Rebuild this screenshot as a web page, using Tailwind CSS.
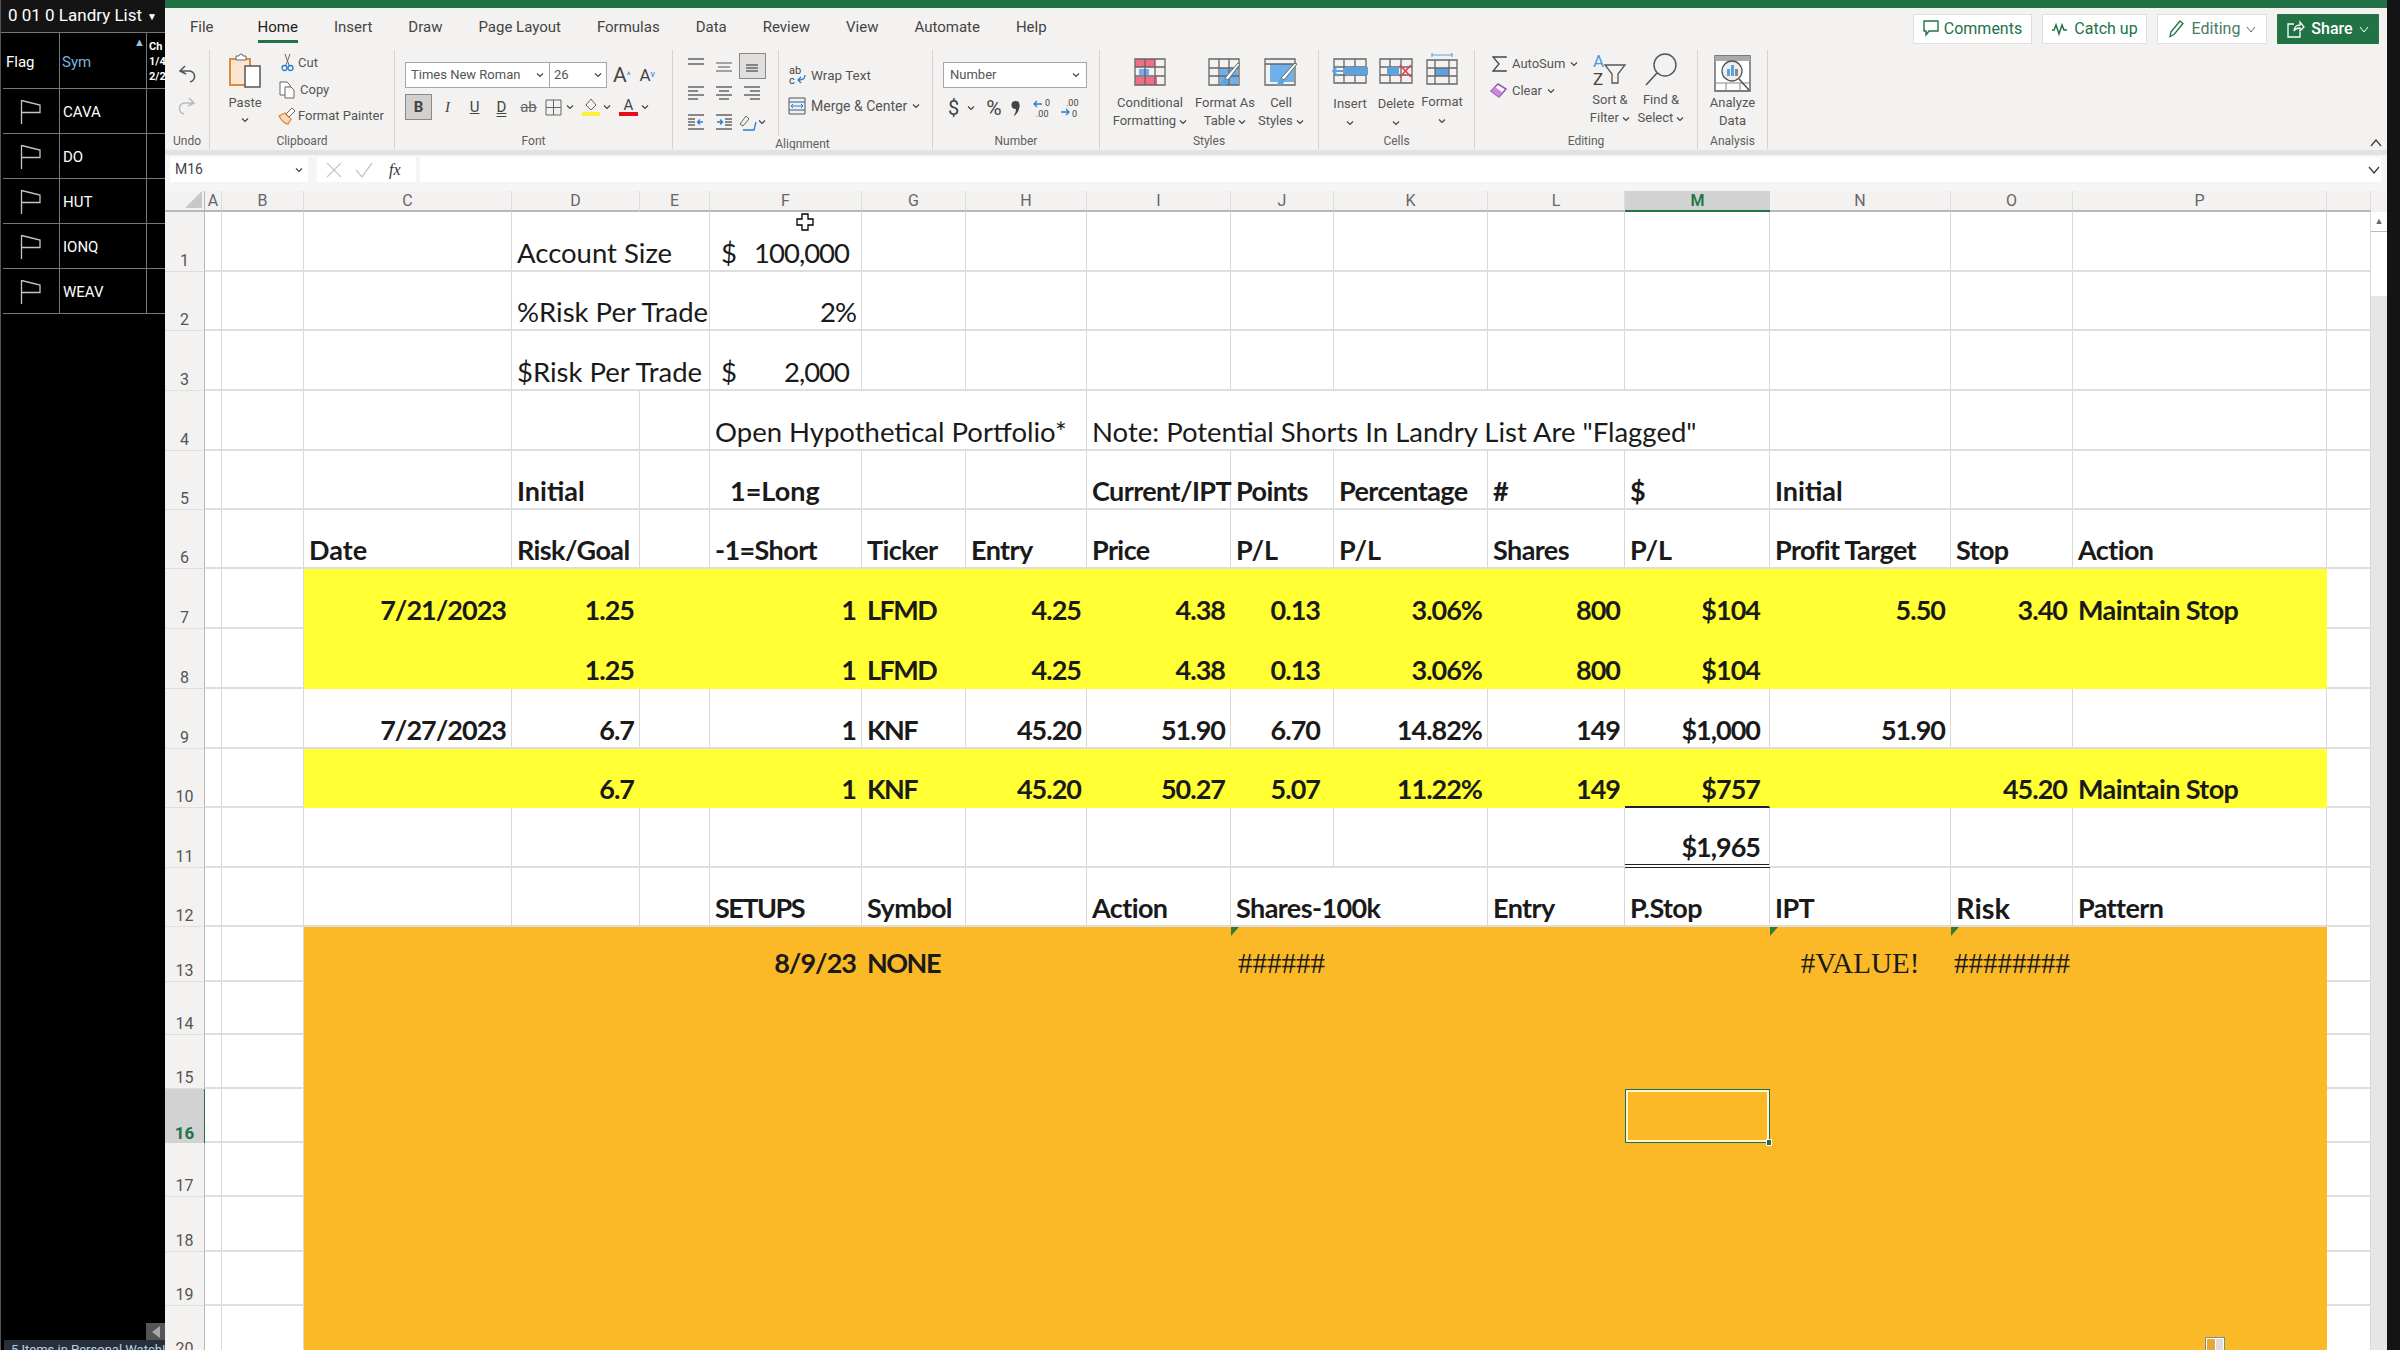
<!DOCTYPE html>
<html lang="en">
<head>
  <meta charset="UTF-8" />
  <title>Excel - Hypothetical Portfolio</title>
  <script src="https://cdn.jsdelivr.net/npm/@tailwindcss/browser@4"></script>
</head>
<body class="bg-black font-[Roboto,sans-serif]">
  <svg class="hidden">
    <symbol id="flag" viewBox="0 0 24 26"><path d="M1.5 1V25M1.5 1.5L20 6V13.5H1.5" fill="none" stroke="#c4c4c4" stroke-width="1.3"/></symbol>
    <symbol id="chev" viewBox="0 0 8 6"><path d="M1 1.5l3 3 3-3" fill="none" stroke="#444" stroke-width="1.2"/></symbol>
    <symbol id="al-top" viewBox="0 0 20 20"><path d="M2 3h16M2 8h16M4 13h0" stroke="#666" stroke-width="1.5"/></symbol>
    <symbol id="al-mid" viewBox="0 0 20 20"><path d="M2 7h16M4 11h12M2 15h16" stroke="#888" stroke-width="1.5"/></symbol>
    <symbol id="al-left" viewBox="0 0 20 20"><path d="M2 3h16M2 7h10M2 11h16M2 15h10" stroke="#666" stroke-width="1.5"/></symbol>
    <symbol id="al-center" viewBox="0 0 20 20"><path d="M2 3h16M5 7h10M2 11h16M5 15h10" stroke="#666" stroke-width="1.5"/></symbol>
    <symbol id="al-right" viewBox="0 0 20 20"><path d="M2 3h16M8 7h10M2 11h16M8 15h10" stroke="#666" stroke-width="1.5"/></symbol>
  </svg>

  <div class="relative flex w-[2400px] h-[1350px] overflow-hidden bg-black">

    <!-- watchlist panel -->
    <aside class="w-[165px] h-full flex flex-col border-l border-[#555] text-white shrink-0">
      <div class="h-[33px] flex items-center pl-[7px] bg-[#141414] border-b border-[#777] text-[17px] whitespace-nowrap">0 01 0 Landry List<span class="ml-[5px] text-[10px]">&#9660;</span></div>
      <div class="h-[56px] flex border-b border-[#777] ml-[2px]">
        <div class="w-[57px] border-r border-[#777] flex items-center pl-[3px] pt-[3px] text-[15px]">Flag</div>
        <div class="w-[87px] relative border-r border-[#777] flex items-center pl-[2px] pt-[3px] text-[15px] text-[#7db4dc]">Sym<span class="absolute right-[1px] top-[2px] text-[11px] text-[#8ec6e6]">&#9650;</span></div>
        <div class="flex-1 overflow-hidden pl-[2px] pt-[6px] text-[11px] leading-[15px] font-bold">Ch<br>1/4<br>2/2</div>
      </div>
      <div id="watch"></div>
      <div class="flex-1 flex items-end justify-end">
        <div class="w-[19px] h-[17px] bg-[#555] flex items-center justify-center"><span class="w-0 h-0 border-y-[6px] border-y-transparent border-r-[8px] border-r-[#a8a8a8]"></span></div>
      </div>
      <div class="h-[10px] ml-[3px] overflow-hidden bg-[#27303a] pl-[7px] text-[13px] leading-[16px] pt-[2px] text-[#b8cfe2] whitespace-nowrap">5 Items in Personal WatchList</div>
    </aside>

    <!-- excel window -->
    <main class="w-[2222px] h-full flex flex-col bg-[#f3f2f1] shrink-0">
      <div class="h-[8px] bg-[#217346]"></div>

      <!-- tabs -->
      <div class="h-[42px] flex items-start pl-[25px] text-[15px] text-[#444]">
        <div class="flex gap-[36px]">
          <span class="h-[35px] pt-[8px]">File</span>
          <span class="h-[35px] pt-[8px] ml-[8px] border-b-[3px] border-[#217346] text-[#222]">Home</span>
          <span class="h-[35px] pt-[8px]">Insert</span>
          <span class="h-[35px] pt-[8px]">Draw</span>
          <span class="h-[35px] pt-[8px]">Page Layout</span>
          <span class="h-[35px] pt-[8px]">Formulas</span>
          <span class="h-[35px] pt-[8px]">Data</span>
          <span class="h-[35px] pt-[8px]">Review</span>
          <span class="h-[35px] pt-[8px]">View</span>
          <span class="h-[35px] pt-[8px]">Automate</span>
          <span class="h-[35px] pt-[8px]">Help</span>
        </div>
        <div class="ml-auto mt-[6px] mr-[8px] flex gap-[10px] text-[16px] text-[#217346]">
          <div class="w-[119px] h-[30px] flex items-center justify-center gap-[5px] bg-white border border-[#e1dfdd]">
            <svg class="w-[16px] h-[18px]" viewBox="0 0 16 18"><path d="M1 1h14v10H6l-3 4v-4H1z" fill="none" stroke="#217346" stroke-width="1.4"/></svg>Comments</div>
          <div class="w-[105px] h-[30px] flex items-center justify-center gap-[5px] bg-white border border-[#e1dfdd]">
            <svg class="w-[18px] h-[16px]" viewBox="0 0 18 16"><path d="M1 9h2l2-5 3 9 3-9 2 5h3" fill="none" stroke="#217346" stroke-width="1.5"/></svg>Catch up</div>
          <div class="w-[110px] h-[30px] flex items-center justify-center gap-[6px] bg-white border border-[#e1dfdd] text-[#4a7b62]">
            <svg class="w-[18px] h-[20px]" viewBox="0 0 18 20"><path d="M3 13L12 2l3 2.500-9 11-4 2z" fill="none" stroke="#217346" stroke-width="1.3"/></svg>Editing
            <svg class="w-[10px] h-[7px]" viewBox="0 0 10 7"><path d="M1 1l4 5 4-5" fill="none" stroke="#666"/></svg></div>
          <div class="w-[102px] h-[30px] flex items-center justify-center gap-[6px] bg-[#217346] rounded-[1px] font-medium text-white">
            <svg class="w-[18px] h-[20px]" viewBox="0 0 18 20"><path d="M7 5H1v13h12v-5M7 12c0-4 3-6 6-6V3l4 5-4 4V9c-3 0-5 1-6 3z" fill="none" stroke="#fff" stroke-width="1.3"/></svg>Share
            <svg class="w-[10px] h-[7px]" viewBox="0 0 10 7"><path d="M1 1l4 5 4-5" fill="none" stroke="#fff"/></svg></div>
        </div>
      </div>

      <!-- ribbon -->
      <div class="h-[100px] flex text-[13px] leading-[18px] text-[#555] whitespace-nowrap">
        <section class="w-[45px] h-[99px] flex flex-col border-r border-[#d5d3d1]">
          <div class="h-[86px] flex flex-col items-center gap-[12px] pt-[15px]">
            <svg class="w-[18px] h-[20px]" viewBox="0 0 18 20"><path d="M7 1L2 6l6 3M2.500 6H10a5.500 5.500 0 0 1 2 11" fill="none" stroke="#555" stroke-width="1.5"/></svg>
            <svg class="w-[18px] h-[20px]" viewBox="0 0 18 20"><path d="M11 1l5 5-6 3M15.500 6H8a5.500 5.500 0 0 0-2 11" fill="none" stroke="#bbb" stroke-width="1.5"/></svg>
          </div>
          <div class="text-center text-[12px] leading-[16px] text-[#605e5c]">Undo</div>
        </section>

        <section class="w-[185px] h-[99px] flex flex-col border-r border-[#d5d3d1]">
          <div class="h-[86px] flex">
            <div class="w-[70px] flex flex-col items-center pt-[3px]">
              <svg class="w-[34px] h-[36px]" viewBox="0 0 34 36"><path d="M2 6h20v26H2z" fill="#fbe5d0" stroke="#e08a3c" stroke-width="2"/><path d="M8 6V3h3a2 2 0 0 1 4 0h3v4H8z" fill="#fff" stroke="#666"/><path d="M17 13h15v21H17z" fill="#fff" stroke="#555" stroke-width="1.500"/></svg>
              <span class="mt-[5px]">Paste</span>
              <svg class="w-[8px] h-[6px] mt-[5px]"><use href="#chev"/></svg>
            </div>
            <div class="flex flex-col ml-[1px]">
              <div class="h-[26px] flex items-center gap-[4px]">
                <svg class="w-[13px] h-[20px]" viewBox="0 0 13 20"><path d="M4 1l4 11M9 1L5 12" fill="none" stroke="#666"/><circle cx="3.500" cy="15" r="2.500" fill="none" stroke="#2b7cd3" stroke-width="1.300"/><circle cx="9.500" cy="15" r="2.500" fill="none" stroke="#2b7cd3" stroke-width="1.300"/></svg><span>Cut</span></div>
              <div class="h-[27px] flex items-center gap-[4px]">
                <svg class="w-[17px] h-[18px] -ml-[2px]" viewBox="0 0 17 18"><path d="M1 1h7l3 3v10H1z" fill="#fff" stroke="#666"/><path d="M6 6h6l3 3v8H6z" fill="#fff" stroke="#666"/></svg><span>Copy</span></div>
              <div class="h-[26px] flex items-center gap-[2px]">
                <svg class="w-[18px] h-[18px] -ml-[3px]" viewBox="0 0 18 18"><path d="M1 9l6-3 6 6-3 5c-3 0-7-4-9-8z" fill="#fbd9b5" stroke="#e08a3c" stroke-width="1.300"/><path d="M8 7l6-6 3 3-6 6z" fill="#fff" stroke="#666"/></svg><span>Format Painter</span></div>
            </div>
          </div>
          <div class="text-center text-[12px] leading-[16px] text-[#605e5c]">Clipboard</div>
        </section>

        <section class="w-[278px] h-[99px] flex flex-col border-r border-[#d5d3d1]">
          <div class="h-[86px] pl-[10px] pt-[12px]">
            <div class="flex items-center">
              <div class="w-[202px] h-[26px] flex border border-[#a6a6a6] bg-white">
                <div class="w-[144px] flex items-center justify-between px-[5px] border-r border-[#a6a6a6]">Times New Roman<svg class="w-[8px] h-[6px]"><use href="#chev"/></svg></div>
                <div class="flex-1 flex items-center justify-between px-[4px]">26<svg class="w-[8px] h-[6px]"><use href="#chev"/></svg></div>
              </div>
              <span class="ml-[6px] text-[21px] text-[#444]">A<sup class="text-[9px] text-[#2b7cd3]">^</sup></span>
              <span class="ml-[9px] text-[17px] text-[#444]">A<sup class="text-[9px] text-[#2b7cd3]">v</sup></span>
            </div>
            <div class="mt-[6px] h-[26px] flex items-center text-[15px] text-[#444]">
              <span class="w-[27px] h-[26px] flex items-center justify-center bg-[#d2d0ce] border border-[#8a8886] font-bold">B</span>
              <span class="w-[27px] ml-[2px] text-center font-['Liberation_Serif',serif] italic">I</span>
              <span class="w-[27px] text-center underline">U</span>
              <span class="w-[27px] text-center underline decoration-double">D</span>
              <span class="w-[27px] text-center line-through text-[#666]">ab</span>
              <svg class="w-[17px] h-[17px] ml-[3px]" viewBox="0 0 17 17"><path d="M1 1h15v15H1zM8.500 1v15M1 8.500h15" fill="none" stroke="#666"/></svg>
              <svg class="w-[8px] h-[6px] ml-[4px]"><use href="#chev"/></svg>
              <div class="ml-[8px] flex flex-col items-center w-[18px]"><svg class="w-[14px] h-[14px]" viewBox="0 0 14 14"><path d="M7 1l5 6-5 5-5-5z" fill="none" stroke="#666"/></svg><span class="w-[18px] h-[4px] bg-[#ffef3a]"></span></div>
              <svg class="w-[8px] h-[6px] ml-[3px]"><use href="#chev"/></svg>
              <div class="ml-[8px] flex flex-col items-center w-[19px] leading-[14px]"><span>A</span><span class="w-[19px] h-[4px] bg-[#e3101a]"></span></div>
              <svg class="w-[8px] h-[6px] ml-[3px]"><use href="#chev"/></svg>
            </div>
          </div>
          <div class="text-center text-[12px] leading-[16px] text-[#605e5c]">Font</div>
        </section>

        <section class="w-[260px] h-[99px] flex flex-col border-r border-[#d5d3d1]">
          <div class="h-[86px] flex">
            <div class="w-[106px] pl-[9px] pt-[2px] grid grid-cols-[28px_28px_28px] grid-rows-[28px_28px_28px] place-items-center border-r border-[#d5d3d1]">
              <svg class="w-[20px] h-[20px]"><use href="#al-top"/></svg>
              <svg class="w-[20px] h-[20px]"><use href="#al-mid"/></svg>
              <span class="w-[27px] h-[26px] flex items-center justify-center bg-[#e1dfdd] border border-[#8a8886]"><svg class="w-[18px] h-[18px]" viewBox="0 0 18 18"><path d="M3 8h12M3 11h12M3 14h12" stroke="#666" stroke-width="1.500"/></svg></span>
              <svg class="w-[20px] h-[20px]"><use href="#al-left"/></svg>
              <svg class="w-[20px] h-[20px]"><use href="#al-center"/></svg>
              <svg class="w-[20px] h-[20px]"><use href="#al-right"/></svg>
              <svg class="w-[20px] h-[18px]" viewBox="0 0 20 18"><path d="M2 2h16M2 16h16M2 6h7M2 9h7M2 12h7" stroke="#666" stroke-width="1.300"/><path d="M17 9h-5m2-2.500L11.500 9l2.500 2.500" fill="none" stroke="#2b7cd3" stroke-width="1.300"/></svg>
              <svg class="w-[20px] h-[18px]" viewBox="0 0 20 18"><path d="M2 2h16M2 16h16M11 6h7M11 9h7M11 12h7" stroke="#666" stroke-width="1.300"/><path d="M3 9h5M6 6.500L8.500 9 6 11.500" fill="none" stroke="#2b7cd3" stroke-width="1.300"/></svg>
              <div class="flex items-center"><svg class="w-[20px] h-[20px]" viewBox="0 0 20 20"><path d="M2 12l6-8 3 3-6 7z" fill="none" stroke="#666"/><path d="M5 18h11l2-8" fill="none" stroke="#2b7cd3" stroke-width="1.300"/></svg><svg class="w-[8px] h-[6px]"><use href="#chev"/></svg></div>
            </div>
            <div class="pl-[9px] pt-[12px]">
              <div class="h-[26px] flex items-center gap-[4px] text-[13.5px]">
                <svg class="w-[19px] h-[20px]" viewBox="0 0 19 20"><text x="1" y="9" font-size="11" fill="#444">ab</text><text x="1" y="19" font-size="11" fill="#444">c</text><path d="M17 10c0 4-2 5-6 5m2-3l-3 3 3 3" fill="none" stroke="#2b7cd3" stroke-width="1.300"/></svg>Wrap Text</div>
              <div class="h-[35px] flex items-center gap-[5px] text-[14px]">
                <svg class="w-[18px] h-[18px]" viewBox="0 0 18 18"><path d="M1 1h16v16H1z" fill="#e8f2fb" stroke="#555"/><path d="M1 5h16M1 13h16" stroke="#555"/><path d="M3 9h12M5 7L3 9l2 2M13 7l2 2-2 2" fill="none" stroke="#2b7cd3"/></svg>Merge &amp; Center<svg class="w-[8px] h-[6px]"><use href="#chev"/></svg></div>
            </div>
          </div>
          <div class="text-center text-[12px] leading-[16px] text-[#605e5c]">Alignment</div>
        </section>

        <section class="w-[167px] h-[99px] flex flex-col border-r border-[#d5d3d1]">
          <div class="h-[86px] pl-[10px] pt-[12px]">
            <div class="w-[144px] h-[26px] flex items-center justify-between px-[6px] border border-[#a6a6a6] bg-white">Number<svg class="w-[8px] h-[6px]"><use href="#chev"/></svg></div>
            <div class="mt-[6px] h-[28px] flex items-center text-[#444]">
              <span class="text-[20px] ml-[5px]">$</span>
              <svg class="w-[8px] h-[6px] ml-[8px]"><use href="#chev"/></svg>
              <span class="text-[21px] ml-[11px]">%</span>
              <svg class="w-[9px] h-[17px] ml-[9px]" viewBox="0 0 9 17"><circle cx="4.500" cy="5" r="4" fill="#444"/><path d="M8.500 5c0 5-2 9-6 11 2-3 3-6 2-8z" fill="#444"/></svg>
              <svg class="w-[22px] h-[22px] ml-[12px]" viewBox="0 0 22 22"><path d="M10 7H2m3-3L2 7l3 3" fill="none" stroke="#2b7cd3" stroke-width="1.300"/><text x="13" y="9" font-size="9" fill="#444">0</text><text x="4" y="20" font-size="9" fill="#444">.00</text></svg>
              <svg class="w-[22px] h-[22px] ml-[5px]" viewBox="0 0 22 22"><text x="7" y="9" font-size="9" fill="#444">.00</text><path d="M2 15h8m-3-3l3 3-3 3" fill="none" stroke="#2b7cd3" stroke-width="1.300"/><text x="13" y="20" font-size="9" fill="#444">0</text></svg>
            </div>
          </div>
          <div class="text-center text-[12px] leading-[16px] text-[#605e5c]">Number</div>
        </section>

        <section class="w-[219px] h-[99px] flex flex-col border-r border-[#d5d3d1]">
          <div class="h-[86px] flex pl-[5px] text-center leading-[18px]">
            <div class="w-[90px] flex flex-col items-center pt-[8px]">
              <svg class="w-[32px] h-[28px]" viewBox="0 0 32 28"><path d="M1 1h20v8H1zM1 19h22v8H1z" fill="#f26d85"/><path d="M5 11h10v6H5z" fill="#6fb0ea"/><path d="M1 1h30v26H1zM1 9h30M1 18h30M11 1v26M21 1v26" fill="none" stroke="#666" stroke-width="1.300"/></svg>
              <span class="mt-[8px]">Conditional</span><span>Formatting <svg class="inline w-[8px] h-[6px]"><use href="#chev"/></svg></span>
            </div>
            <div class="w-[60px] flex flex-col items-center pt-[8px]">
              <svg class="w-[34px] h-[30px]" viewBox="0 0 34 30"><path d="M12 10h18v17H12z" fill="#6fb0ea"/><path d="M1 1h30v26H1zM1 10h30M1 18h30M11 1v26M21 1v26" fill="none" stroke="#666" stroke-width="1.300"/><path d="M32 6L20 22l-3-2L30 5z" fill="#fff" stroke="#666"/><path d="M17 20c-3 1-2 5-5 7 5 1 9-1 8-5z" fill="#5ba3e0"/></svg>
              <span class="mt-[6px]">Format As</span><span>Table <svg class="inline w-[8px] h-[6px]"><use href="#chev"/></svg></span>
            </div>
            <div class="w-[52px] flex flex-col items-center pt-[8px]">
              <svg class="w-[34px] h-[30px]" viewBox="0 0 34 30"><path d="M6 6h24v18H6z" fill="#6fb0ea"/><path d="M1 1h30v26H1zM1 6h30" fill="none" stroke="#666" stroke-width="1.300"/><path d="M33 6L20 22l-3-2L31 5z" fill="#fff" stroke="#666"/><path d="M17 20c-3 1-2 5-5 7 5 1 9-1 8-5z" fill="#5ba3e0"/></svg>
              <span class="mt-[6px]">Cell</span><span>Styles <svg class="inline w-[8px] h-[6px]"><use href="#chev"/></svg></span>
            </div>
          </div>
          <div class="text-center text-[12px] leading-[16px] text-[#605e5c]">Styles</div>
        </section>

        <section class="w-[156px] h-[99px] flex flex-col border-r border-[#d5d3d1]">
          <div class="h-[86px] flex pl-[8px] text-center">
            <div class="w-[46px] flex flex-col items-center pt-[8px]">
              <svg class="w-[38px] h-[26px]" viewBox="0 0 38 26"><path d="M3 1h32v24H3zM3 9h32M3 17h32M13 1v24M24 1v24" fill="none" stroke="#666" stroke-width="1.300"/><path d="M14 9h23v8H14z" fill="#5ba3e0"/><path d="M18 13H2m5-5l-5 5 5 5" fill="none" stroke="#5ba3e0" stroke-width="1.800"/></svg>
              <span class="mt-[11px]">Insert</span><svg class="w-[8px] h-[6px] mt-[7px]"><use href="#chev"/></svg>
            </div>
            <div class="w-[46px] flex flex-col items-center pt-[8px]">
              <svg class="w-[34px] h-[26px]" viewBox="0 0 34 26"><path d="M1 1h32v24H1zM1 9h32M1 17h32M11 1v24M22 1v24" fill="none" stroke="#666" stroke-width="1.300"/><path d="M8 9h12v8H8z" fill="#5ba3e0"/><path d="M21 7l11 12M32 7L21 19" stroke="#e8434f" stroke-width="1.800"/></svg>
              <span class="mt-[11px]">Delete</span><svg class="w-[8px] h-[6px] mt-[7px]"><use href="#chev"/></svg>
            </div>
            <div class="w-[46px] flex flex-col items-center pt-[3px]">
              <svg class="w-[32px] h-[32px]" viewBox="0 0 32 32"><path d="M6 2h20M6 0v4M26 0v4" stroke="#5ba3e0" stroke-width="1.200"/><path d="M9 15h14v8H9z" fill="#5ba3e0"/><path d="M1 7h30v24H1zM1 15h30M1 23h30M9 7v24M23 7v24" fill="none" stroke="#666" stroke-width="1.300"/></svg>
              <span class="mt-[8px]">Format</span><svg class="w-[8px] h-[6px] mt-[7px]"><use href="#chev"/></svg>
            </div>
          </div>
          <div class="text-center text-[12px] leading-[16px] text-[#605e5c]">Cells</div>
        </section>

        <section class="w-[223px] h-[99px] flex flex-col border-r border-[#d5d3d1]">
          <div class="h-[86px] flex pl-[17px] text-center">
            <div class="w-[92px] pt-[1px] text-left">
              <div class="h-[26px] flex items-center gap-[5px]"><svg class="w-[15px] h-[16px]" viewBox="0 0 15 16"><path d="M14 2V1H1l6 7-6 7h13v-1" fill="none" stroke="#444" stroke-width="1.300"/></svg>AutoSum<svg class="w-[8px] h-[6px]"><use href="#chev"/></svg></div>
              <div class="h-[27px] flex items-center gap-[5px] -ml-[2px]"><svg class="w-[17px] h-[16px]" viewBox="0 0 17 16"><path d="M1 8l7-7 8 5-7 8z" fill="#fff" stroke="#9b4fb4" stroke-width="1.500"/><path d="M1 8l4-4 7 5-3 5z" fill="#c988db"/></svg>Clear<svg class="w-[8px] h-[6px]"><use href="#chev"/></svg></div>
            </div>
            <div class="w-[52px] flex flex-col items-center pt-[2px]">
              <svg class="w-[34px] h-[36px]" viewBox="0 0 34 36"><text x="0" y="15" font-size="17" fill="#4a9bd9">A</text><text x="0" y="33" font-size="17" fill="#444">Z</text><path d="M12 13h20l-7 9v9l-6 0v-9z" fill="none" stroke="#555" stroke-width="1.300"/></svg>
              <span class="mt-[3px]">Sort &amp;</span><span>Filter <svg class="inline w-[8px] h-[6px]"><use href="#chev"/></svg></span>
            </div>
            <div class="w-[50px] flex flex-col items-center pt-[2px]">
              <svg class="w-[34px] h-[36px]" viewBox="0 0 34 36"><circle cx="21" cy="13" r="11" fill="none" stroke="#555" stroke-width="1.400"/><path d="M13 21L2 33" stroke="#555" stroke-width="1.600"/></svg>
              <span class="mt-[3px]">Find &amp;</span><span>Select <svg class="inline w-[8px] h-[6px]"><use href="#chev"/></svg></span>
            </div>
          </div>
          <div class="text-center text-[12px] leading-[16px] text-[#605e5c]">Editing</div>
        </section>

        <section class="w-[70px] h-[99px] flex flex-col border-r border-[#d5d3d1]">
          <div class="h-[86px] flex flex-col items-center pt-[5px] text-center">
            <svg class="w-[37px] h-[37px]" viewBox="0 0 37 37"><path d="M1 1h35v35H1z" fill="#fff" stroke="#555" stroke-width="1.300"/><path d="M1 1h35v5H1z" fill="#aaa"/><path d="M1 28h35M12 28v8M26 28v8" stroke="#888"/><circle cx="18" cy="16" r="10" fill="#eee" stroke="#555" stroke-width="1.300"/><path d="M13 14h3v7h-3zM17 10h3v11h-3z" fill="#5ba3e0"/><path d="M21 14h3v7h-3z" fill="#888"/><path d="M25 24l10 11" stroke="#555" stroke-width="1.600"/></svg>
            <span class="mt-[2px]">Analyze</span><span>Data</span>
          </div>
          <div class="text-center text-[12px] leading-[16px] text-[#605e5c]">Analysis</div>
        </section>

        <div class="flex-1 flex items-end justify-end pr-[5px] pb-[3px]">
          <svg class="w-[12px] h-[8px]" viewBox="0 0 12 8"><path d="M1 7l5-6 5 6" fill="none" stroke="#444" stroke-width="1.400"/></svg>
        </div>
      </div>

      <div class="h-[5px] bg-[#e2e2e2]"></div>

      <!-- formula bar -->
      <div class="h-[36px] flex items-start pt-[2px] bg-[#f5f5f5] text-[14px] text-[#444]">
        <div class="ml-[5px] w-[138px] h-[25px] flex items-center justify-between px-[5px] bg-white">M16<svg class="w-[8px] h-[6px]"><use href="#chev"/></svg></div>
        <div class="ml-[9px] w-[99px] h-[25px] flex items-center gap-[13px] pl-[9px] bg-white">
          <svg class="w-[16px] h-[16px]" viewBox="0 0 16 16"><path d="M1 1l14 14M15 1L1 15" stroke="#c8c8c8" stroke-width="1.300"/></svg>
          <svg class="w-[18px] h-[16px]" viewBox="0 0 18 16"><path d="M1 8l6 7L17 1" fill="none" stroke="#c8c8c8" stroke-width="1.300"/></svg>
          <span class="ml-[3px] font-['Liberation_Serif',serif] italic text-[16px] text-[#333]">fx</span>
        </div>
        <div class="ml-[4px] flex-1 h-[25px] flex items-center justify-end pr-[1px] mr-[6px] bg-white">
          <svg class="w-[12px] h-[8px]" viewBox="0 0 12 8"><path d="M1 1l5 6 5-6" fill="none" stroke="#444" stroke-width="1.400"/></svg>
        </div>
      </div>

      <!-- sheet -->
      <div class="flex-1 min-h-0 flex overflow-hidden">
        <div id="sheet" class="w-[2206px] grid grid-cols-[40px_17px_82px_208px_128px_70px_152px_104px_121px_144px_103px_154px_137px_145px_181px_122px_254px_44px] grid-rows-[21px_60px_59px_60px_60px_59px_59px_60px_60px_60px_59px_60px_59px_55px_53px_54px_54px_54px_55px_54px_54px] bg-white font-[Lato,sans-serif] text-[27.5px] leading-[34px] text-[#1a1a1a]"></div>
        <div class="w-[16px] flex flex-col">
          <div class="h-[21px] shrink-0 bg-[#f3f2f1]"></div>
          <div class="flex-1 bg-[#e6e6e6]">
            <div class="h-[20px] flex items-center justify-center bg-white border-b border-[#bbb] text-[9px] text-[#666]">&#9650;</div>
            <div class="h-[64px] bg-white"></div>
          </div>
        </div>
      </div>
    </main>

    <div class="flex-1 bg-[#141414]"></div>

    <!-- mouse cursor -->
    <svg class="absolute left-[796px] top-[213px] w-[18px] h-[18px]" viewBox="0 0 18 18"><path d="M6 1h6v5h5v6h-5v5H6v-5H1V6h5z" fill="#fff" stroke="#000" stroke-width="1.300"/></svg>
    <!-- quick analysis button -->
    <div class="absolute left-[2205px] top-[1337px] w-[20px] h-[15px] flex gap-[1px] bg-white border border-[#888] p-[1px]"><span class="w-[9px] bg-[#e5a63a]"></span><span class="w-[7px] bg-[#ddd]"></span></div>
  </div>

  <script>
    document.getElementById("watch").innerHTML = ["CAVA", "DO", "HUT", "IONQ", "WEAV"].map((sym) => `
      <div class="h-[45px] flex ml-[2px] border-b border-[#777]">
        <div class="w-[57px] border-r border-[#777] flex items-center pl-[17px] pt-[2px]"><svg class="w-[24px] h-[26px]"><use href="#flag"/></svg></div>
        <div class="w-[87px] border-r border-[#777] flex items-center pl-[3px] pt-[3px] text-[15px]">${sym}</div>
      </div>`).join("");

    const SPANS = { 2: "col-span-2", 3: "col-span-3", 5: "col-span-5" };
    const COLS = "ABCDEFGHIJKLMNOPQ".split("");
    const BOLD = "font-bold text-[27px]";
    const NUM = "tracking-[-1px]";
    const CAPS = "tracking-[-1.5px]";
    const TIGHT = "tracking-[-0.6px]";
    const YELLOW = "bg-[#ffff33]";
    const ORANGE = "bg-[#fbb927]";
    const SERIF = "font-['Liberation_Serif',serif] text-[29px]";

    const l = (t, opts = {}) => ({ t, ...opts });
    const r = (t, opts = {}) => ({ t, ...opts, cls: `justify-end ${NUM} ${opts.cls || ""}` });
    const lp = { cls: "pr-[9px]" };

    const rows = [
      { cells: { D: l("Account Size", { span: 2 }), F: { acct: "100,000" } } },
      { cells: { D: l("%Risk Per Trade", { span: 2 }), F: r("2%") } },
      { cells: { D: l("$Risk Per Trade", { span: 2 }), F: { acct: "2,000" } } },
      { cells: { F: l("Open Hypothetical Portfolio*", { span: 3 }), I: l('Note: Potential Shorts In Landry List Are "Flagged"', { span: 5 }) } },
      { weight: BOLD, cells: { D: l("Initial"), F: l("1=Long", { cls: "pl-[20px]" }), I: l("Current/IPT", { cls: TIGHT }), J: l("Points", { cls: TIGHT }), K: l("Percentage", { cls: TIGHT }), L: l("#"), M: l("$"), N: l("Initial") } },
      { weight: BOLD, cells: { C: l("Date"), D: l("Risk/Goal", { cls: TIGHT }), F: l("-1=Short", { cls: TIGHT }), G: l("Ticker", { cls: TIGHT }), H: l("Entry", { cls: TIGHT }), I: l("Price", { cls: TIGHT }), J: l("P/L"), K: l("P/L"), L: l("Shares", { cls: TIGHT }), M: l("P/L"), N: l("Profit Target", { cls: TIGHT }), O: l("Stop", { cls: TIGHT }), P: l("Action", { cls: TIGHT }) } },
      { weight: BOLD, fill: YELLOW, cells: { C: r("7/21/2023"), D: r("1.25"), F: r("1"), G: l("LFMD", { cls: CAPS }), H: r("4.25"), I: r("4.38"), J: r("0.13", { cls: "pr-[13px]" }), K: r("3.06%"), L: r("800", { cls: "pr-[4px]" }), M: r("$104", lp), N: r("5.50"), O: r("3.40"), P: l("Maintain Stop", { cls: TIGHT }) } },
      { weight: BOLD, fill: YELLOW, cells: { D: r("1.25"), F: r("1"), G: l("LFMD", { cls: CAPS }), H: r("4.25"), I: r("4.38"), J: r("0.13", { cls: "pr-[13px]" }), K: r("3.06%"), L: r("800", { cls: "pr-[4px]" }), M: r("$104", lp) } },
      { weight: BOLD, cells: { C: r("7/27/2023"), D: r("6.7"), F: r("1"), G: l("KNF", { cls: CAPS }), H: r("45.20"), I: r("51.90"), J: r("6.70", { cls: "pr-[13px]" }), K: r("14.82%"), L: r("149", { cls: "pr-[4px]" }), M: r("$1,000", lp), N: r("51.90") } },
      { weight: BOLD, fill: YELLOW, cells: { D: r("6.7"), F: r("1"), G: l("KNF", { cls: CAPS }), H: r("45.20"), I: r("50.27"), J: r("5.07", { cls: "pr-[13px]" }), K: r("11.22%"), L: r("149", { cls: "pr-[4px]" }), M: r("$757", { ...lp, line: "border-r border-r-transparent border-b-2 border-b-[#222]" }), O: r("45.20"), P: l("Maintain Stop", { cls: TIGHT }) } },
      { weight: BOLD, cells: { M: r("$1,965", { ...lp, line: "border-r border-r-[#d9d9d9] border-b-[4px] border-double border-b-[#222]" }) } },
      { weight: BOLD, cells: { F: l("SETUPS", { cls: CAPS }), G: l("Symbol", { cls: TIGHT }), I: l("Action", { cls: TIGHT }), J: l("Shares-100k", { span: 2, cls: TIGHT }), L: l("Entry", { cls: TIGHT }), M: l("P.Stop", { cls: TIGHT }), N: l("IPT", { cls: TIGHT }), O: l("Risk", { raw: true, cls: "font-bold text-[29px]" }), P: l("Pattern", { cls: TIGHT }) } },
      { weight: BOLD, fill: ORANGE, cells: { F: r("8/9/23"), G: l("NONE", { cls: CAPS }), J: l("######", { raw: true, cls: SERIF + " pl-[7px]", mark: true }), N: l("#VALUE!", { raw: true, cls: SERIF + " justify-center", mark: true }), O: l("########", { raw: true, cls: SERIF + " pl-[3px]", mark: true }) } },
      { fill: ORANGE, cells: {} },
      { fill: ORANGE, cells: {} },
      { fill: ORANGE, cells: { M: { selected: true } } },
      { fill: ORANGE, cells: {} },
      { fill: ORANGE, cells: {} },
      { fill: ORANGE, cells: {} },
      { fill: ORANGE, cells: {} },
    ];

    const GRID = "border-r border-b-2 border-r-[#d9d9d9] border-b-[#dedede]";
    const FILLED = "border-r border-b-2 border-transparent";
    const MARK = '<span class="absolute left-0 top-0 w-0 h-0 border-t-[9px] border-r-[8px] border-t-[#2e7d32] border-r-transparent"></span>';

    let html = '<div class="flex items-end justify-end bg-[#f3f2f1] border-r border-b-2 border-[#b8b8b8] pr-[2px] pb-[2px]"><span class="w-0 h-0 border-b-[17px] border-l-[17px] border-b-[#c8c8c8] border-l-transparent"></span></div>';
    COLS.forEach((c) => {
      const tone = c === "M"
        ? "bg-[#d2d2d2] text-[#217346] font-semibold border-b-2 border-b-[#217346]"
        : "bg-[#f3f2f1] text-[#666] border-b-2 border-b-[#b8b8b8] border-r border-r-[#dcdcdc]";
      html += `<div class="flex items-center justify-center font-[Roboto,sans-serif] text-[16px] leading-[20px] ${tone}">${c === "Q" ? "" : c}</div>`;
    });

    rows.forEach((row, idx) => {
      const n = idx + 1;
      const hdr = n === 16
        ? "bg-[#d2d2d2] text-[#217346] font-bold border-r border-r-[#217346] text-[17px]"
        : "bg-[#f3f2f1] text-[#555] border-r border-r-[#b8b8b8] border-b border-b-[#dedede] text-[16px]";
      html += `<div class="flex items-end justify-center font-[Roboto,sans-serif] leading-[20px] ${hdr}">${n}</div>`;

      for (let i = 0; i < COLS.length; i++) {
        const cell = row.cells[COLS[i]] || {};
        const filled = row.fill && i >= 2 && i <= 15;
        const bg = filled ? row.fill : "";
        const line = cell.line || (filled ? FILLED : GRID);

        if (cell.selected) {
          html += `<div class="relative z-10 ${bg} border border-[#1f6e43] shadow-[inset_0_0_0_2px_#fff6d8]"><span class="absolute -right-[3px] -bottom-[4px] w-[6px] h-[7px] bg-[#1f6e43] border border-white"></span></div>`;
          continue;
        }
        if (cell.acct) {
          html += `<div class="flex items-end justify-between pl-[11px] pr-[12px] ${NUM} ${line}"><span>$</span><span>${cell.acct}</span></div>`;
          continue;
        }
        const span = SPANS[cell.span] || "";
        const extra = cell.cls || "";
        const pad = extra.includes("pr-") ? "pl-[5px]" : extra.includes("pl-") ? "pr-[5px]" : "px-[5px]";
        const weight = cell.raw ? "" : row.weight || "";
        html += `<div class="relative flex items-end min-w-0 whitespace-nowrap ${pad} ${span} ${bg} ${line} ${weight} ${extra}">${cell.mark ? MARK : ""}${cell.t || ""}</div>`;
        if (cell.span) i += cell.span - 1;
      }
    });
    document.getElementById("sheet").innerHTML = html;
  </script>
</body>
</html>
